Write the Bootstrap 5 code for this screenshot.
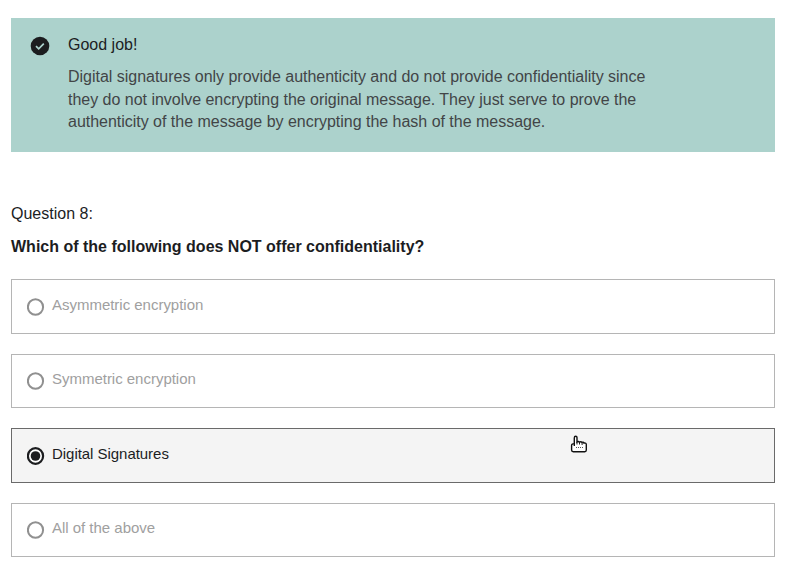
<!DOCTYPE html>
<html lang="en">
<head>
<meta charset="utf-8">
<meta name="viewport" content="width=device-width, initial-scale=1">
<title>Question 8</title>
<link href="https://cdn.jsdelivr.net/npm/bootstrap@5.3.0/dist/css/bootstrap.min.css" rel="stylesheet">
<style>
body { font-family: "Liberation Sans", Arial, sans-serif; color: #1c1d1f; font-size: 16px; padding: 18px 15px 0 11px; overflow: hidden; }
.feedback { background: #acd2cc; height: 134px; padding: 16px 20px 0 19px; gap: 18px; }
.feedback svg { margin-top: 2px; }
.feedback-title { line-height: 22px; margin-bottom: 10px; }
.feedback-text { line-height: 22.5px; color: #424547; width: 590px; letter-spacing: -.02px; }
.question-label { margin-top: 51px; line-height: 22px; }
.question-text { font-weight: 700; line-height: 22px; margin: 11px 0 21px; }
.answers { gap: 20px; }
.answer { height: 54.5px; border: 1px solid #b5b5b5; padding: 0 15px; gap: 7px; color: #a0a0a0; font-size: 15px; letter-spacing: -.02px; }
.answer svg { margin-top: 1px; }
.answer span { margin-top: -3px; }
.answer.selected { background: #f4f4f4; border-color: #6a6a6a; color: #1c1d1f; letter-spacing: -.04px; }
.pointer { left: 569px; top: 434px; }
</style>
</head>
<body>
<section class="feedback d-flex align-items-start">
<svg class="flex-shrink-0" width="20" height="20" viewBox="0 0 20 20"><circle cx="10" cy="10" r="9.3" fill="#1c1d1f"/><path d="M6 10.1l2.7 2.7 5.1-5.2" fill="none" stroke="#acd2cc" stroke-width="1.7"/></svg>
<div><div class="feedback-title">Good job!</div>
<div class="feedback-text">Digital signatures only provide authenticity and do not provide confidentiality since<br>they do not involve encrypting the original message. They just serve to prove the<br>authenticity of the message by encrypting the hash of the message.</div></div>
</section>
<div class="question-label">Question 8:</div>
<div class="question-text">Which of the following does NOT offer confidentiality?</div>
<div class="answers d-flex flex-column">
<label class="answer d-flex align-items-center"><svg width="18" height="18" viewBox="0 0 18 18"><ellipse cx="8.5" cy="9" rx="7.6" ry="7.8" fill="#fff" stroke="#909090" stroke-width="2"/></svg><span>Asymmetric encryption</span></label>
<label class="answer d-flex align-items-center"><svg width="18" height="18" viewBox="0 0 18 18"><ellipse cx="8.5" cy="9" rx="7.6" ry="7.8" fill="#fff" stroke="#909090" stroke-width="2"/></svg><span>Symmetric encryption</span></label>
<label class="answer selected d-flex align-items-center"><svg width="18" height="18" viewBox="0 0 18 18"><ellipse cx="8.5" cy="9" rx="7.6" ry="7.8" fill="#fff" stroke="#1c1d1f" stroke-width="2.2"/><circle cx="8.5" cy="9" r="4.8" fill="#1c1d1f"/></svg><span>Digital Signatures</span></label>
<label class="answer d-flex align-items-center"><svg width="18" height="18" viewBox="0 0 18 18"><ellipse cx="8.5" cy="9" rx="7.6" ry="7.8" fill="#fff" stroke="#909090" stroke-width="2"/></svg><span>All of the above</span></label>
</div>
<svg class="pointer position-absolute" width="20" height="20" viewBox="0 0 20 20"><path d="M5.3 12V4Q5.3 2.3 6.7 2.3T8 4V8Q9.3 6.8 10.5 8.2 11.8 7.1 13.1 8.5 14.3 7.6 15 9.1 17.3 8.7 17.3 10.6V16Q17.3 17.7 15.8 17.7H4.3Q2.6 17.7 2.6 16V11.5Q2.6 9.3 5.3 10" fill="#fff" stroke="#111" stroke-width="1.4"/><path d="M8 8v2.5M10.5 8.5v2M13.1 9v2" stroke="#222"/><path d="M7 13.5h8" stroke="#555" stroke-dasharray="1 1"/></svg>
<script src="https://cdn.jsdelivr.net/npm/bootstrap@5.3.0/dist/js/bootstrap.bundle.min.js"></script>
</body>
</html>
